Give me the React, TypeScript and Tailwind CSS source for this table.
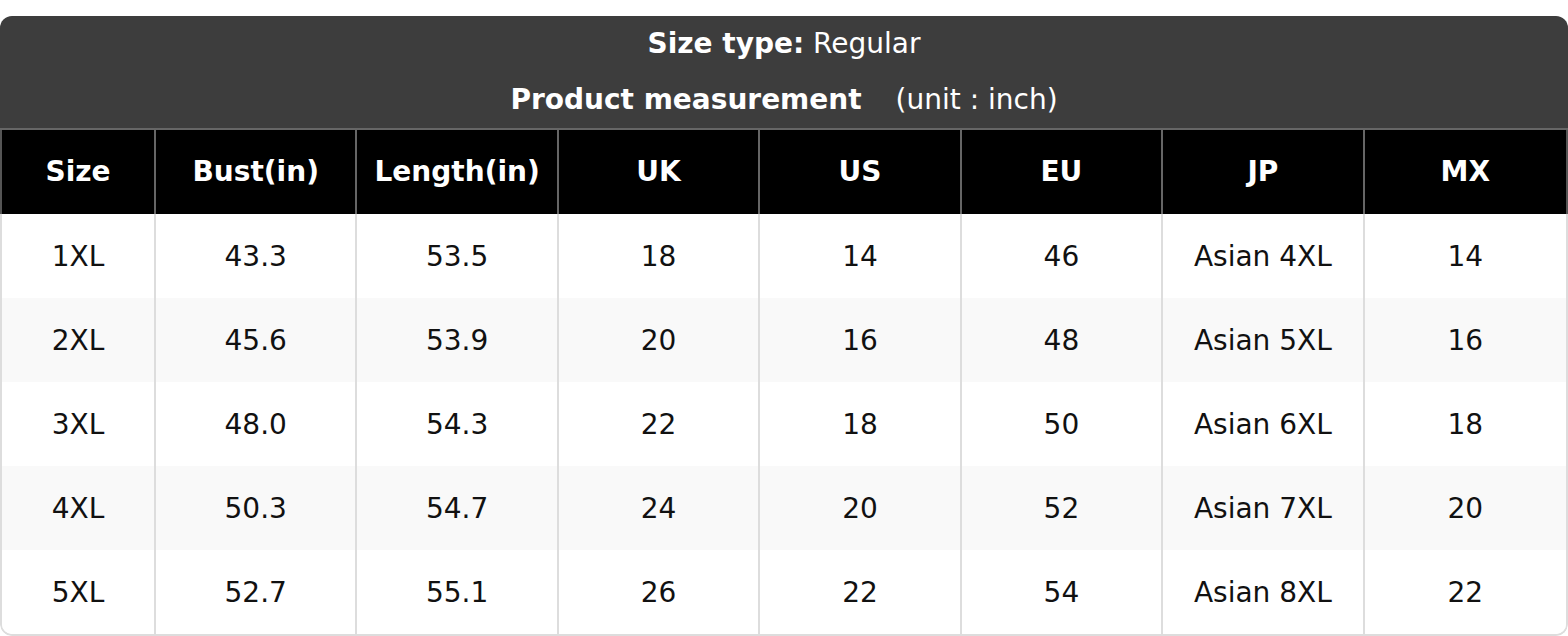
import React from "react";

const headers = ["Size", "Bust(in)", "Length(in)", "UK", "US", "EU", "JP", "MX"];
const rows = [
  ["1XL", "43.3", "53.5", "18", "14", "46", "Asian 4XL", "14"],
  ["2XL", "45.6", "53.9", "20", "16", "48", "Asian 5XL", "16"],
  ["3XL", "48.0", "54.3", "22", "18", "50", "Asian 6XL", "18"],
  ["4XL", "50.3", "54.7", "24", "20", "52", "Asian 7XL", "20"],
  ["5XL", "52.7", "55.1", "26", "22", "54", "Asian 8XL", "22"],
];

export default function App() {
  return (
    <div
      className="w-[1568px] h-[636px] bg-white pt-4"
      style={{ fontFamily: '"DejaVu Sans", Verdana, sans-serif' }}
    >
      <div className="rounded-[12px] overflow-hidden">
        <div className="bg-[#3d3d3d] text-white text-[28px] h-[112px] flex flex-col">
          <div className="h-[56px] flex items-center justify-center">
            <span className="font-bold">Size type:</span>
            <span>&nbsp;Regular</span>
          </div>
          <div className="h-[56px] flex items-center justify-center">
            <span className="font-bold">Product measurement</span>
            <span className="ml-[34px]">(unit : inch)</span>
          </div>
        </div>
        <div className="border-t-2 border-[#666666]">
          <div className="grid grid-cols-[154px_repeat(7,minmax(0,1fr))] bg-black text-white text-[28px] font-bold h-[84px] border-x-2 border-[#555555]">
            {headers.map((h, i) => (
              <div
                key={h}
                className={`flex items-center justify-center ${i < headers.length - 1 ? "border-r-2 border-[#666666]" : ""}`}
              >
                {h}
              </div>
            ))}
          </div>
          <div className="border-x-2 border-b-2 border-[#dddddd] rounded-b-[12px] overflow-hidden">
            {rows.map((r, ri) => (
              <div
                key={ri}
                className={`grid grid-cols-[154px_repeat(7,minmax(0,1fr))] h-[84px] text-[28px] text-[#111111] ${ri % 2 === 1 ? "bg-[#f9f9f9]" : "bg-white"}`}
              >
                {r.map((c, ci) => (
                  <div
                    key={ci}
                    className={`flex items-center justify-center pt-[2px] ${ci < r.length - 1 ? "border-r-2 border-[#dddddd]" : ""}`}
                  >
                    {c}
                  </div>
                ))}
              </div>
            ))}
          </div>
        </div>
      </div>
    </div>
  );
}
